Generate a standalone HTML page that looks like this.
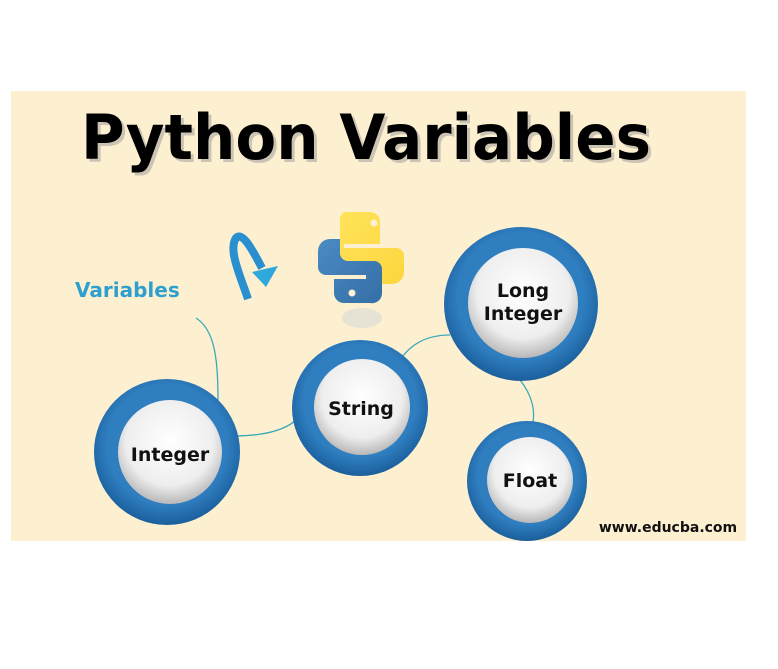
<!DOCTYPE html>
<html><head><meta charset="utf-8"><style>
html,body{margin:0;padding:0;background:#fff;width:778px;height:669px;overflow:hidden}
svg{display:block}
</style></head><body>
<svg width="778" height="669" viewBox="0 0 778 669" xmlns="http://www.w3.org/2000/svg">
<defs>
<radialGradient id="ring" cx="50%" cy="45%" r="55%">
<stop offset="0.75" stop-color="#2f7ec0"/><stop offset="1" stop-color="#1b5f9c"/>
</radialGradient>
<radialGradient id="inner" cx="50%" cy="40%" r="60%">
<stop offset="0" stop-color="#ffffff"/><stop offset="0.7" stop-color="#eeeeee"/><stop offset="1" stop-color="#b8b8b8"/>
</radialGradient>
<linearGradient id="ylw" x1="0" y1="0" x2="1" y2="1"><stop offset="0" stop-color="#ffe35a"/><stop offset="1" stop-color="#fcd63d"/></linearGradient>
<linearGradient id="blu" x1="0" y1="0" x2="1" y2="1"><stop offset="0" stop-color="#4c8ac4"/><stop offset="1" stop-color="#356fa6"/></linearGradient>
</defs>
<rect x="11" y="91" width="735" height="450" fill="#fdf0d1"/>
<text x="84" y="162" font-family="DejaVu Sans, Liberation Sans, sans-serif" font-weight="bold" font-size="62" fill="#9a9a9a" opacity="0.5" textLength="570" lengthAdjust="spacingAndGlyphs">Python Variables</text>
<text x="81" y="159" font-family="DejaVu Sans, Liberation Sans, sans-serif" font-weight="bold" font-size="62" fill="#000" textLength="570" lengthAdjust="spacingAndGlyphs">Python Variables</text>
<text x="75" y="297" font-family="DejaVu Sans, Liberation Sans, sans-serif" font-weight="bold" font-size="20" fill="#2ea0cf">Variables</text>
<g fill="none" stroke="#3aaab8" stroke-width="1.3">
<path d="M196 318 C215 330 218 360 218 400"/>
<path d="M232 436 C260 436 285 432 298 418"/>
<path d="M400 360 C410 345 425 335 450 335"/>
<path d="M520 380 C532 395 535 410 533 422"/>
</g>
<!-- arrow -->
<path d="M248 299 C240 275 228 250 236 238 C242 232 250 245 262 268" fill="none" stroke="#2a8fcf" stroke-width="8"/>
<path d="M252 272 L278 266 L266 287 Z" fill="#2fa8dc"/>
<g>
<path d="M344 212 h26 a10 10 0 0 1 10 10 v22 h-36 v4 h52 a8 8 0 0 1 8 8 v16 a12 12 0 0 1 -12 12 h-10 v-14 a8 8 0 0 0 -8 -8 h-26 a8 8 0 0 1 -8 -8 v-32 a10 10 0 0 1 4 -10 z" fill="url(#ylw)"/>
<circle cx="374" cy="223" r="3.5" fill="#fdf0d1"/>
<path d="M370 303 h-26 a10 10 0 0 1 -10 -10 v-14 h32 v-4 h-40 a8 8 0 0 1 -8 -8 v-16 a12 12 0 0 1 12 -12 h10 v14 a8 8 0 0 0 8 8 h26 a8 8 0 0 1 8 8 v24 a10 10 0 0 1 -12 10 z" fill="url(#blu)"/>
<circle cx="352" cy="293" r="3.5" fill="#fdf0d1"/>
<ellipse cx="362" cy="318" rx="20" ry="10" fill="#d9dbd6" opacity="0.6"/>
</g>
<g font-family="DejaVu Sans, Liberation Sans, sans-serif" font-weight="bold" fill="#111" text-anchor="middle">
<circle cx="167" cy="452" r="73" fill="url(#ring)"/>
<circle cx="170" cy="452" r="52" fill="url(#inner)"/>
<text x="170" y="461" font-size="19" fill="#111">Integer</text>
<circle cx="360" cy="408" r="68" fill="url(#ring)"/>
<circle cx="362" cy="407" r="48" fill="url(#inner)"/>
<text x="361" y="415" font-size="19" fill="#111">String</text>
<circle cx="521" cy="304" r="77" fill="url(#ring)"/>
<circle cx="523" cy="303" r="55" fill="url(#inner)"/>
<text x="523" y="297" font-size="19" fill="#111">Long</text>
<text x="523" y="320" font-size="19" fill="#111">Integer</text>
<circle cx="527" cy="481" r="60" fill="url(#ring)"/>
<circle cx="530" cy="480" r="43" fill="url(#inner)"/>
<text x="530" y="487" font-size="19" fill="#111">Float</text>
</g>
<text x="668" y="532" text-anchor="middle" font-family="DejaVu Sans, Liberation Sans, sans-serif" font-weight="bold" font-size="14" fill="#111">www.educba.com</text>
</svg>
</body></html>
